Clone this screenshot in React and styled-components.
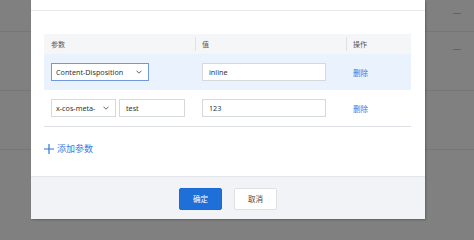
import React from "react";
import styled, { createGlobalStyle } from "styled-components";

const GlobalStyle = createGlobalStyle`
  html, body {
    margin: 0;
    padding: 0;
    background: #808080;
  }
  body {
    font-family: "Noto Sans", "Noto Sans CJK SC", sans-serif;
  }
`;

const Chevron = () => (
  <svg width="6" height="4" viewBox="0 0 6 4">
    <path d="M0.5 0.7 L3 3.2 L5.5 0.7" fill="none" stroke="#555" strokeWidth="0.9" />
  </svg>
);

const Plus = () => (
  <svg width="10" height="10" viewBox="0 0 10 10">
    <path d="M5 0 V10 M0 5 H10" stroke="#2f74d8" strokeWidth="1.2" />
  </svg>
);

const rows = [
  { key: "Content-Disposition", custom: null, value: "inline", active: true },
  { key: "x-cos-meta-", custom: "test", value: "123", active: false },
];

const App = () => {
  return (
    <Page>
      <GlobalStyle />
      <BackList>
        <BackRow $h={32}>
          <Dash>—</Dash>
        </BackRow>
        <BackRow $h={59}>
          <Dash $top={10}>—</Dash>
        </BackRow>
        <BackRow $h={59} />
      </BackList>

      <Modal>
        <ModalHead />
        <ModalBody>
          <Table>
            <HeadRow>
              <HeadCell>参数</HeadCell>
              <HeadCell $divider>值</HeadCell>
              <HeadCell $divider>操作</HeadCell>
            </HeadRow>
            {rows.map((row) => (
              <Row key={row.key} $active={row.active}>
                <Cell>
                  <Select $focus={row.active} $w={row.custom ? 65 : 98}>
                    <span>{row.key}</span>
                    <Chevron />
                  </Select>
                  {row.custom && <Input $w={66}>{row.custom}</Input>}
                </Cell>
                <Cell>
                  <Input $w={124}>{row.value}</Input>
                </Cell>
                <Cell>
                  <Link>删除</Link>
                </Cell>
              </Row>
            ))}
          </Table>
          <AddParam>
            <Plus />
            <span>添加参数</span>
          </AddParam>
        </ModalBody>
        <Footer>
          <Button $primary>确定</Button>
          <Button>取消</Button>
        </Footer>
      </Modal>
    </Page>
  );
};

export default App;

const Page = styled.div`
  position: relative;
  width: 474px;
  height: 240px;
  overflow: hidden;
  background: #808080;
`;

const BackList = styled.div`
  display: flex;
  flex-direction: column;
`;

const BackRow = styled.div`
  position: relative;
  height: ${(p) => p.$h}px;
  border-bottom: 1px solid #767676;
  box-sizing: border-box;
`;

const Dash = styled.span`
  position: absolute;
  left: 453px;
  top: ${(p) => p.$top ?? 6}px;
  font-size: 8px;
  line-height: 14px;
  color: #5a5a5a;
`;

const Modal = styled.div`
  position: absolute;
  left: 31px;
  top: 0;
  width: 394px;
  background: #fff;
  box-shadow: 1px 1px 2px rgba(0, 0, 0, 0.25);
  display: flex;
  flex-direction: column;
`;

const ModalHead = styled.div`
  height: 10px;
  border-bottom: 1px solid #e8e9eb;
`;

const ModalBody = styled.div`
  padding: 23px 14px 0 13px;
  height: 165px;
  box-sizing: border-box;
`;

const Table = styled.div`
  display: flex;
  flex-direction: column;
  border-bottom: 1px solid #dcdfe3;
`;

const HeadRow = styled.div`
  display: grid;
  grid-template-columns: 151px 151px 65px;
  height: 20px;
  background: #f5f6f8;
`;

const HeadCell = styled.div`
  position: relative;
  display: flex;
  align-items: center;
  padding-left: 7px;
  font-size: 7px;
  color: #555;

  &::before {
    content: "";
    display: ${(p) => (p.$divider ? "block" : "none")};
    position: absolute;
    left: 0;
    top: 3px;
    bottom: 3px;
    width: 1px;
    background: #e0e2e6;
  }
`;

const Row = styled.div`
  display: grid;
  grid-template-columns: 151px 151px 65px;
  height: 36px;
  background: ${(p) => (p.$active ? "#eaf2fd" : "#fff")};
`;

const Cell = styled.div`
  display: flex;
  align-items: center;
  gap: 3px;
  padding-left: 7px;
`;

const Select = styled.div`
  width: ${(p) => p.$w}px;
  height: 18px;
  box-sizing: border-box;
  display: flex;
  align-items: center;
  justify-content: space-between;
  padding: 0 6px 0 4px;
  background: #fff;
  border: 1px solid ${(p) => (p.$focus ? "#6f99dc" : "#d6d8dc")};
  font-size: 7.2px;
  color: #333;
  white-space: nowrap;
`;

const Input = styled.div`
  width: ${(p) => p.$w}px;
  height: 18px;
  box-sizing: border-box;
  display: flex;
  align-items: center;
  padding-left: 6px;
  background: #fff;
  border: 1px solid #d6d8dc;
  font-size: 7.2px;
  color: #333;
`;

const Link = styled.span`
  font-size: 7.5px;
  color: #3a7be0;
`;

const AddParam = styled.div`
  display: flex;
  align-items: center;
  gap: 3px;
  margin-top: 15px;
  font-size: 9px;
  color: #3a7be0;
`;

const Footer = styled.div`
  height: 43px;
  box-sizing: border-box;
  background: #f1f3f6;
  border-top: 1px solid #e2e5ea;
  display: flex;
  align-items: center;
  justify-content: center;
  gap: 12px;
  padding-top: 1px;
`;

const Button = styled.button`
  width: 43px;
  height: 22px;
  border-radius: 2px;
  font-family: "Noto Sans", "Noto Sans CJK SC", sans-serif;
  font-size: 7.5px;
  padding: 0;
  border: 1px solid ${(p) => (p.$primary ? "#1c6bd4" : "#dfe1e5")};
  background: ${(p) => (p.$primary ? "#1f6fd8" : "#fff")};
  color: ${(p) => (p.$primary ? "#fff" : "#444")};
`;
